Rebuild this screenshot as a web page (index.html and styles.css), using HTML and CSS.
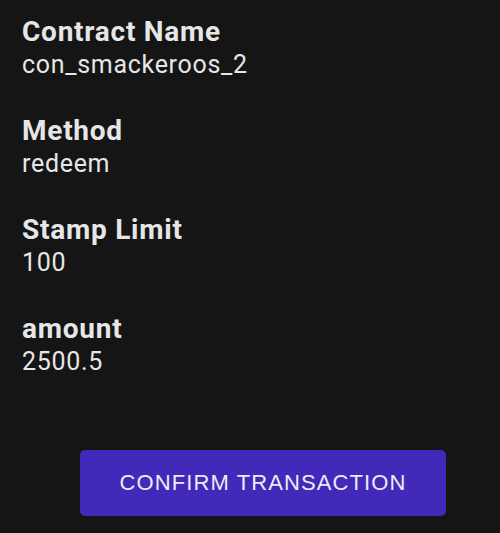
FILE: index.html
```html
<!DOCTYPE html>
<html>
<head>
<meta charset="utf-8">
<link rel="stylesheet" href="styles.css">
</head>
<body>
<div class="page">
  <div class="field">
    <div class="label">Contract Name</div>
    <div class="value">con_smackeroos_2</div>
  </div>
  <div class="field">
    <div class="label">Method</div>
    <div class="value">redeem</div>
  </div>
  <div class="field">
    <div class="label">Stamp Limit</div>
    <div class="value">100</div>
  </div>
  <div class="field">
    <div class="label">amount</div>
    <div class="value">2500.5</div>
  </div>
  <div class="actions">
    <button class="confirm">CONFIRM TRANSACTION</button>
  </div>
</div>
</body>
</html>
```
FILE: styles.css
```css
html, body {
  margin: 0;
  padding: 0;
  background: #151515;
  height: 100%;
}
.page {
  padding: 15px 22px 0 22px;
  font-family: Roboto, "Liberation Sans", sans-serif;
  color: #e6e6e6;
}
.field {
  margin-bottom: 33px;
}
.label {
  font-size: 28px;
  font-weight: 700;
  line-height: 33px;
  letter-spacing: 0.75px;
}
.value {
  font-size: 25px;
  line-height: 33px;
  letter-spacing: 0.7px;
}
.actions {
  display: flex;
  justify-content: flex-end;
  padding-right: 32px;
  padding-top: 39px;
}
.confirm {
  width: 366px;
  height: 66px;
  background: #4229b9;
  color: #ecebf7;
  border: none;
  border-radius: 5px;
  font-family: "Liberation Sans", Arial, sans-serif;
  font-size: 22px;
  letter-spacing: 1.1px;
  padding: 0;
}
```
